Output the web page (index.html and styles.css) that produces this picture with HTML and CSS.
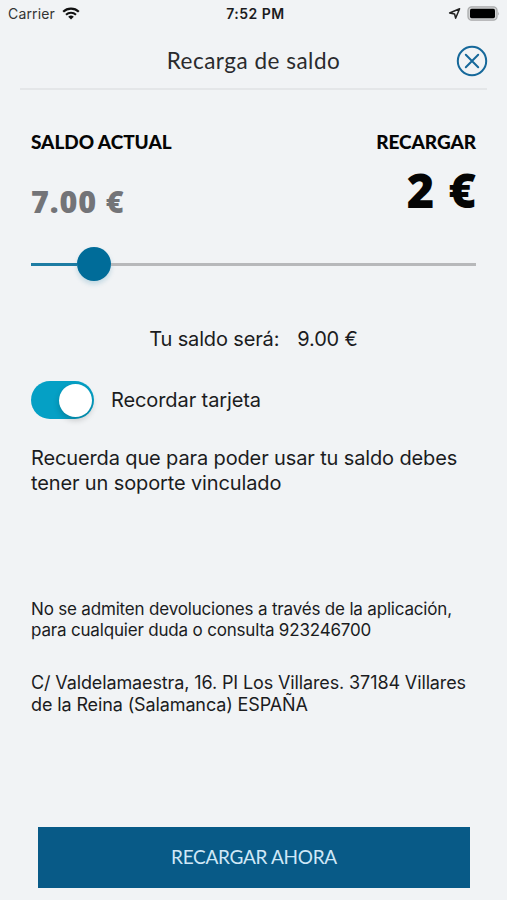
FILE: index.html
```
<!DOCTYPE html>
<html lang="es">
<head>
    <meta charset="UTF-8">
    <title>Recarga de saldo</title>
    <link rel="stylesheet" href="styles.css">
</head>
<body>

    <div class="status">
        <div class="status-left">
            <span class="carrier">Carrier</span>
            <svg class="wifi" width="18" height="13" viewBox="0 0 18 13">
                <path d="M1.2 4.7a11.2 11.2 0 0 1 15.6 0" fill="none" stroke="#111" stroke-width="2.2"/>
                <path d="M4 7.7a7.2 7.2 0 0 1 10 0" fill="none" stroke="#111" stroke-width="2"/>
                <path d="M9 12.6L6.2 9.8a4 4 0 0 1 5.6 0z" fill="#111"/>
            </svg>
        </div>
        <span class="clock">7:52 PM</span>
        <div class="status-right">
            <svg width="13" height="13" viewBox="0 0 13 13">
                <path d="M1.6 6L11.6 1.8L7.6 11.2L6.6 7z" fill="none" stroke="#222" stroke-width="1.5" stroke-linejoin="round"/>
            </svg>
            <svg class="battery" width="33" height="15" viewBox="0 0 33 15">
                <rect x="1" y="0.8" width="29" height="13.4" rx="3.6" fill="#d2d3d4" stroke="#aaabac" stroke-width="1.3"/>
                <rect x="3" y="2.8" width="25" height="9.4" rx="1.6" fill="#000"/>
                <path d="M31.2 5.4q1.5 2 0 4.2z" fill="#aaabac"/>
            </svg>
        </div>
    </div>

    <div class="header">
        <h1>Recarga de saldo</h1>
        <svg class="close" width="32" height="32" viewBox="0 0 32 32">
            <circle cx="16" cy="16" r="14.2"/>
            <path d="M9.8 9.8L22.2 22.2M22.2 9.8L9.8 22.2"/>
        </svg>
    </div>

    <div class="content">
        <div class="amounts">
            <div class="current">
                <h2>SALDO ACTUAL</h2>
                <p>7.00 €</p>
            </div>
            <div class="recharge">
                <h2>RECARGAR</h2>
                <p>2 €</p>
            </div>
        </div>

        <div class="slider">
            <div class="fill"></div>
            <div class="thumb"></div>
            <div class="rest"></div>
        </div>

        <div class="result">
            <span>Tu saldo será:</span>
            <span>9.00 €</span>
        </div>

        <div class="remember">
            <div class="switch"><div class="knob"></div></div>
            <span>Recordar tarjeta</span>
        </div>

        <p class="note">Recuerda que para poder usar tu saldo debes<br>tener un soporte vinculado</p>
        <p class="terms">No se admiten devoluciones a través de la aplicación,<br>para cualquier duda o consulta 923246700</p>
        <p class="address">C/ Valdelamaestra, 16. PI Los Villares. 37184 Villares<br>de la Reina (Salamanca) ESPAÑA</p>
    </div>

    <button class="submit">RECARGAR AHORA</button>

</body>
</html>
```
FILE: styles.css
```
body,h1,h2,p{ margin: 0; padding: 0; }
svg{ display: block; }

body{
    width: 507px;
    height: 900px;
    background: #f1f3f5;
    color: #1b1c1e;
    font-family: Inter, "Liberation Sans", sans-serif;
    white-space: nowrap;
    overflow: hidden;
    display: flex;
    flex-direction: column;
}

/* 状态栏 */
.status{
    height: 27px;
    padding: 0 7px 0 8px;
    display: grid;
    grid-template-columns: 1fr auto 1fr;
    align-items: center;
    font-size: 14px;
    line-height: 27px;
}

.status-left,.status-right{
    display: flex;
    align-items: center;
}

.status-left{ gap: 7px; }
.status-right{ justify-content: flex-end; gap: 6px; }
.carrier{ color: #333; letter-spacing: 0.15px; }

.clock{
    padding-left: 3px;
    font-weight: 600;
    letter-spacing: 0.5px;
}

.header{
    height: 61px;
    margin: 0 20px;
    border-bottom: 2px solid #e4e6e8;
    display: grid;
    grid-template-columns: 32px 1fr 32px;
}

.header h1{
    grid-column: 2;
    font: 400 22.5px/68px Lato, sans-serif;
    letter-spacing: 0.5px;
    text-align: center;
    color: #2a2b2d;
}

.close{
    margin: 18px 0 0 1px;
    fill: none;
    stroke: #16689a;
    stroke-width: 2;
    stroke-linecap: round;
}

.content{
    padding: 0 31px;
    flex: 1;
}

.amounts{
    display: flex;
    justify-content: space-between;
    padding-top: 40px;
    color: #050505;
}

.amounts h2{
    font: 900 19px/24px Lato, sans-serif;
    letter-spacing: -0.05px;
}

.amounts p{
    font-family: "Open Sans", sans-serif;
}

.current p{
    margin-top: 28px;
    font-size: 30.5px;
    font-weight: 800;
    line-height: 38px;
    letter-spacing: 0.9px;
    color: #737478;
}

.recharge{ text-align: right; }

.recharge p{
    margin-top: 9px;
    font-size: 47px;
    font-weight: 800;
    line-height: 54px;
    word-spacing: 2px;
}

.slider{
    height: 34px;
    margin-top: 27px;
    display: flex;
    align-items: center;
}

.fill{
    width: 46px;
    height: 3px;
    background: #1d7ca3;
}

.thumb{
    width: 34px;
    height: 34px;
    border-radius: 50%;
    background: #006c99;
    box-shadow: 0 3px 5px rgba(0,108,153,.2);
}

.rest{
    flex: 1;
    height: 3px;
    background: #b7b8ba;
}

.result{
    margin-top: 45px;
    display: flex;
    justify-content: center;
    gap: 18px;
    font-size: 20px;
    line-height: 26px;
    letter-spacing: -0.15px;
}

.remember{
    margin-top: 29px;
    display: flex;
    align-items: center;
    gap: 17px;
    font-size: 20px;
    letter-spacing: -0.1px;
}

.switch{
    width: 63px;
    height: 38px;
    border-radius: 19px;
    background: #05a0c5;
    display: flex;
    align-items: center;
    justify-content: flex-end;
}

.knob{
    width: 33px;
    height: 33px;
    margin-right: 2px;
    border-radius: 50%;
    background: #fff;
    box-shadow: 0 3px 6px rgba(0,0,0,.2);
}

.note{
    margin-top: 27px;
    font-size: 20px;
    line-height: 24.5px;
    letter-spacing: -0.13px;
}

.terms{
    margin-top: 104px;
    font-size: 17px;
    line-height: 21px;
    letter-spacing: -0.18px;
}

.address{
    margin-top: 31px;
    font-size: 18px;
    line-height: 21.5px;
    letter-spacing: -0.12px;
}

.submit{
    height: 61px;
    margin: 0 37px 12px 38px;
    padding: 0 0 2px;
    border: 0;
    background: #085a87;
    color: #cfe8f7;
    font: 400 19px Lato, sans-serif;
    letter-spacing: -0.3px;
}
```
